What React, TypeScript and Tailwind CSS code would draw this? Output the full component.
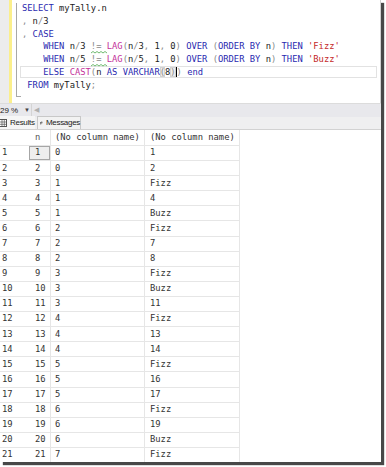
import React from "react"

const mono = { fontFamily: '"DejaVu Sans Mono", "Liberation Mono", monospace' }

const rows: [number, number, string][] = [
  [1, 0, "1"], [2, 0, "2"], [3, 1, "Fizz"], [4, 1, "4"], [5, 1, "Buzz"],
  [6, 2, "Fizz"], [7, 2, "7"], [8, 2, "8"], [9, 3, "Fizz"], [10, 3, "Buzz"],
  [11, 3, "11"], [12, 4, "Fizz"], [13, 4, "13"], [14, 4, "14"], [15, 5, "Fizz"],
  [16, 5, "16"], [17, 5, "17"], [18, 6, "Fizz"], [19, 6, "19"], [20, 6, "Buzz"],
  [21, 7, "Fizz"],
]

const K = ({ children }: { children: React.ReactNode }) => <span className="text-[#2a2ab0]">{children}</span>
const F = ({ children }: { children: React.ReactNode }) => <span className="text-[#c4329a]">{children}</span>
const S = ({ children }: { children: React.ReactNode }) => <span className="text-[#c42828]">{children}</span>
const G = ({ children }: { children: React.ReactNode }) => <span className="text-[#8a8a8a]">{children}</span>

// operator with green squiggle under it (SSMS hint)
const Squig = ({ children }: { children: React.ReactNode }) => (
  <span className="relative text-[#8a8a8a]">
    {children}
    <svg className="absolute left-0 top-[10px]" width="16" height="3" viewBox="0 0 16 3">
      <path d="M0 2 L2 0.5 L4 2 L6 0.5 L8 2 L10 0.5 L12 2 L14 0.5 L16 2" fill="none" stroke="#4aa84a" strokeWidth="0.8" />
    </svg>
  </span>
)

const Brace = ({ children }: { children: React.ReactNode }) => (
  <span className="text-[#8a8a8a] bg-[#ededed] shadow-[inset_0_0_0_1px_#d2d2d2]">{children}</span>
)

function Editor() {
  return (
    <div className="relative h-[103px] flex bg-white">
      <div className="w-[9px] bg-[#ececec]" />
      <div className="w-[3px] bg-[#fbef8c]" />
      <div className="relative w-[8px]">
        <div className="absolute left-[4px] top-[3px] h-[93px] w-px bg-[#a8a8a8]" />
        <div className="absolute left-[4px] top-[96px] w-[5px] h-px bg-[#a8a8a8]" />
      </div>
      <div className="flex-1 relative pt-[2px] pl-[2px] text-[8.8px] leading-[12.8px] text-[#222] whitespace-pre" style={mono}>
        <div className="absolute left-0 right-[3px] top-[66px] h-[12px] border border-[#e2e2e2]" />
        <div><K>SELECT</K> myTally.n</div>
        <div><G>,</G> n<G>/</G>3</div>
        <div><G>,</G> <K>CASE</K></div>
        <div>    <K>WHEN</K> n<G>/</G>3 <Squig>!=</Squig> <F>LAG</F><G>(</G>n<G>/</G>3<G>,</G> 1<G>,</G> 0<G>)</G> <K>OVER</K> <G>(</G><K>ORDER BY</K> n<G>)</G> <K>THEN</K> <S>'Fizz'</S></div>
        <div>    <K>WHEN</K> n<G>/</G>5 <Squig>!=</Squig> <F>LAG</F><G>(</G>n<G>/</G>5<G>,</G> 1<G>,</G> 0<G>)</G> <K>OVER</K> <G>(</G><K>ORDER BY</K> n<G>)</G> <K>THEN</K> <S>'Buzz'</S></div>
        <div className="relative">    <K>ELSE</K> <F>CAST</F><G>(</G>n <K>AS</K> <K>VARCHAR</K><Brace>(</Brace>8<Brace>)</Brace><span className="inline-block w-0 h-[10px] border-l border-black align-middle" /><G>)</G> <K>end</K></div>
        <div> <K>FROM</K> myTally<G>;</G></div>
      </div>
      <div className="w-px bg-[#d0d0d0]" />
    </div>
  )
}

function Bars() {
  return (
    <div style={{ fontFamily: '"Liberation Sans", Arial, sans-serif' }}>
      <div className="h-[14px] flex items-center bg-[#e8e8ec] border-t border-[#dcdcdc] text-[8px] text-[#222]">
        <span className="w-[24px]">29 %</span>
        <span className="text-[6px] text-[#444] w-[5px]">▼</span>
        <span className="ml-[2px] h-full w-px bg-[#d4d4d4]" />
        <span className="ml-[2px] text-[7px] text-[#b0b0b0]">◀</span>
      </div>
      <div className="h-[13px] flex items-end bg-[#efeff0] border-b border-[#d2d2d2] text-[8px] text-[#222]">
        <div className="h-[13px] w-[35px] flex items-center bg-[#f6f6f6] gap-[3px]">
          <svg width="7" height="8" viewBox="1 0 7 8">
            <rect x="0.5" y="0.5" width="7" height="7" fill="#fff" stroke="#555" />
            <path d="M0.5 3H7.5M0.5 5.3H7.5M3 0.5V7.5M5.3 0.5V7.5" stroke="#555" strokeWidth="0.7" />
          </svg>
          <span className="tracking-[-0.3px]">Results</span>
        </div>
        <div className="ml-[2px] h-[13px] w-[44px] flex items-center gap-[3px] border border-b-0 border-[#c8c8c8] bg-[#f2f2f2] pl-[2px]">
          <svg width="9" height="8" viewBox="0 0 9 8">
            <rect x="0.5" y="2.5" width="5" height="5" fill="#fff" stroke="#555" />
            <rect x="3.5" y="0.5" width="5" height="5" fill="#fff" stroke="#555" />
            <path d="M4.5 2H7.5M4.5 3.3H7.5" stroke="#555" strokeWidth="0.6" />
          </svg>
          <span className="tracking-[-0.3px]">Messages</span>
        </div>
      </div>
    </div>
  )
}

function Grid() {
  const cell = "border-r border-b border-[#e6e6e6] flex items-center"
  return (
    <div className="bg-white text-[8.8px] text-[#333]" style={mono}>
      <div className="flex h-[16px] w-[240px]">
        <div className="w-[29px] border-b border-[#e6e6e6]" />
        <div className={`${cell} w-[22px] pl-[6px] text-[#555]`}>n</div>
        <div className={`${cell} w-[94px] pl-[4px]`}>(No column name)</div>
        <div className={`${cell} w-[95px] pl-[5px]`}>(No column name)</div>
      </div>
      {rows.map(([i, q, v]) => (
        <div key={i} className="flex h-[15.1px] w-[240px]">
          <div className="w-[29px] pl-[2px] border-b border-[#e6e6e6] flex items-center">{i}</div>
          <div className={`${cell} w-[22px] pl-[6px] ${i === 1 ? "shadow-[inset_0_0_0_1px_#a6a6a6] bg-[#eeeeee]" : ""}`}>{i}</div>
          <div className={`${cell} w-[94px] pl-[4px]`}>{q}</div>
          <div className={`${cell} w-[95px] pl-[5px]`}>{v}</div>
        </div>
      ))}
    </div>
  )
}

export default function App() {
  return (
    <div className="w-[386px] h-[467px] bg-white">
      <div className="w-[381px] h-[462px] overflow-hidden bg-white shadow-[3px_3px_1px_rgba(40,40,40,0.85)]">
        <Editor />
        <Bars />
        <Grid />
      </div>
    </div>
  )
}
